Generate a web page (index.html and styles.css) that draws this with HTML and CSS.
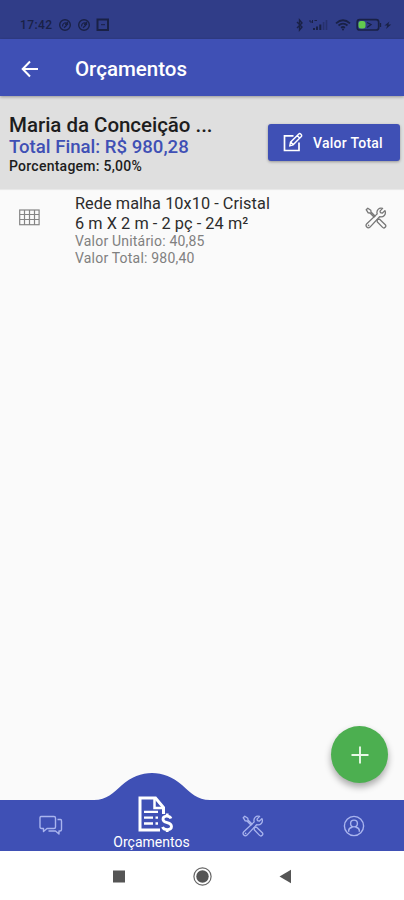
FILE: index.html
```html
<!DOCTYPE html>
<html lang="pt-BR">
<head>
<meta charset="utf-8">
<meta name="viewport" content="width=device-width, initial-scale=1">
<title>Orçamentos</title>
<link rel="stylesheet" href="styles.css">
</head>
<body>
<svg class="defs" width="0" height="0" aria-hidden="true">
  <symbol id="tools" viewBox="0 0 22 22">
    <g fill="none" stroke="currentColor" stroke-width="1.3" stroke-linejoin="round" stroke-linecap="round">
      <path d="M1.2 2.7 2.8 1.2 5.8 3.2 6 5 10 9M1.2 2.7 3.2 5.8 5 6 9 10"/>
      <path d="M12.3 12.6 14.6 12.2 20.3 17.7C21.8 19.5 19.3 22 17.6 20.4L12.2 14.8Z"/>
      <path d="M19.9 3.6 17.2 6.2 15.5 5.7 15 4.1 17.6 1.4C14 .2 11.1 3.3 12.2 6.9L1.8 16.8C-.2 19 2.7 22.2 5 20.1L14.6 9.7C18.4 10.6 21.6 7.6 19.9 3.6Z"/>
    </g>
    <circle cx="3.6" cy="18.4" r=".8" fill="currentColor"/>
  </symbol>
</svg>
<div class="screen">
  <div class="status">
    <span class="clock">17:42</span>
    <svg class="notices" width="54" height="14" viewBox="0 0 54 14" fill="none" stroke="currentColor">
      <g stroke-width="1.4"><circle cx="7" cy="7" r="5.3"/><circle cx="26" cy="7" r="5.3"/></g>
      <path d="M4.5 8.5C4.5 4.5 8 4 9.5 6M9.5 3.8V6.4H7M6 9.8 9 7M23.5 8.5C23.5 4.5 27 4 28.5 6M28.5 3.8V6.4H26M25 9.8 28 7" stroke-width="1.3"/>
      <rect x="39.5" y="1.5" width="10.5" height="10.5" stroke-width="2"/><path d="M43 6.7H47"/>
    </svg>
    <svg class="signals" width="98" height="14" viewBox="0 0 98 14" fill="none" stroke="currentColor">
      <path d="M2 4 7 9 4.5 12V2L7 5 2 10" stroke-width="1.4"/>
      <path d="M15 2V4H18M17.5 2V5M19.5 2.5H22" stroke-width="1"/>
      <path d="M19 12V10M22 12V8.5M25.3 12V6.5" stroke-width="2"/><path d="M28.6 12V4M31.5 12V2" stroke-width="1.6" opacity=".4"/>
      <path d="M41 5.3C45.5 1.3 50.5 1.3 55 5.3M43.5 7.5C46.5 5 49.5 5 52.5 7.5M46 9.7C47.5 8.7 48.5 8.7 50 9.7" stroke-width="1.8"/><circle cx="48" cy="11.5" r="1" fill="currentColor" stroke="none"/>
      <rect x="62.2" y="1.7" width="21.5" height="10.3" rx="2.5" stroke-width="1.7"/>
      <path d="M72 4.5 76 6.5 72 9.5M85.5 5V9" stroke-width="1.3"/>
      <rect x="63.5" y="3" width="7" height="7.5" rx="2.5" fill="#62c94e" stroke="none"/>
      <path d="M94.5 3.5 89.5 7.5H92.3L91 11 96.2 6.6H93.3Z" fill="currentColor" stroke="none"/>
    </svg>
  </div>
  <header class="appbar">
    <svg class="back" width="18" height="18" viewBox="0 0 18 18" fill="none" stroke="#fff" stroke-width="2"><path d="M17 9H2M9 1.5 1.7 9 9 16.5"/></svg>
    <h1>Orçamentos</h1>
  </header>
  <section class="summary">
    <div class="client">
      <div class="name">Maria da Conceição ...</div>
      <div class="total">Total Final: R$ 980,28</div>
      <div class="percent">Porcentagem: 5,00%</div>
    </div>
    <button class="value-button">
      <svg width="20" height="21" viewBox="0 0 20 21" fill="none" stroke="#fff" stroke-width="1.7"><path d="M10.5 3.8H1.5V18.5H16V10.5"/><path d="M6.8 13.8 7.5 10.2 15.8 1.9C17 .8 19.5 3.2 18.3 4.5L10.1 12.8ZM14.2 3.6 16.8 6.2M8 10.3 10 12.5" stroke-width="1.4"/></svg>
      <span>Valor Total</span>
    </button>
  </section>
  <main class="list">
    <article class="item">
      <svg class="grid-icon" width="21" height="17" viewBox="0 0 21 17" fill="none" stroke="#858585"><rect x=".7" y="1" width="19.4" height="14.7" stroke-width="1.2"/><path d="M5.5 1V16M10.500 1V16M15.500 1V16M1 5.500H20M1 10.500H20" stroke-width="1.200"/></svg>
      <div class="details">
        <div class="product">Rede malha 10x10 - Cristal</div>
        <div class="size">6 m X 2 m - 2 pç - 24 m²</div>
        <div class="unit">Valor Unitário: 40,85</div>
        <div class="subtotal">Valor Total: 980,40</div>
      </div>
      <svg class="item-tools" width="22" height="22"><use href="#tools"/></svg>
    </article>
  </main>
  <button class="fab" aria-label="Adicionar"><svg width="18" height="18" viewBox="0 0 18 18" stroke="#e9f8e7" stroke-width="1.9"><path d="M9 .5V17.5M.5 9H17.5"/></svg></button>
  <nav class="tabs">
    <svg class="bump" width="116" height="28" viewBox="0 0 116 28"><path d="M0 28V27C13 27 19 20 28 12C46-4 70-4 88 12C97 20 103 27 116 27V28Z" fill="#3f50b5"/></svg>
    <div class="tab"><svg width="24" height="21" viewBox="0 0 24 21" fill="none" stroke="currentColor" stroke-width="1.4" stroke-linejoin="round"><path d="M2 1.5H15Q16.5 1.5 16.5 3V12Q16.5 13.5 15 13.5H8L4.500 16.500V13.500H2.500Q1 13.500 1 12V3Q1 1.500 2 1.500ZM18.500 4.500H21.500Q22.500 4.500 22.500 6V14.500Q22.500 16 21 16H20V19L16.500 16H9.500"/></svg></div>
    <div class="tab active">
      <svg width="36" height="37" viewBox="0 0 36 37" fill="none" stroke="#fff"><path d="M25.5 18V11.5L17.5 2H2V34H22" stroke-width="3"/><path d="M16.5 3V12H25" stroke-width="2.5"/><path d="M6 15.8H20M6 21.7H15M17.5 21.7H20M6 27.5H15M17.5 27.5H20" stroke-width="2.3"/><path d="M33 22.5C31.5 19.2 25 19.3 25 23.2C25 28 33.5 25.4 33.5 30.4C33.5 34.5 26 34.7 24.5 31M29.2 17.5V21M29.2 32.5V36" stroke-width="2.8"/></svg>
      <span>Orçamentos</span>
    </div>
    <div class="tab"><svg width="22" height="22"><use href="#tools"/></svg></div>
    <div class="tab"><svg width="22" height="22" viewBox="0 0 22 22" fill="none" stroke="currentColor" stroke-width="1.4"><circle cx="11" cy="11" r="9.6"/><circle cx="11" cy="8.5" r="3.4"/><path d="M5.7 16.8V15.5C5.7 13.2 7.2 12.6 9 12.2V11M16.3 16.8V15.5C16.3 13.2 14.8 12.6 13 12.2V11"/></svg></div>
  </nav>
  <div class="system">
    <svg width="404" height="49" viewBox="0 0 404 49"><rect x="113" y="19.5" width="12" height="12" fill="#555"/><circle cx="202.5" cy="25.5" r="8.6" fill="none" stroke="#666" stroke-width="1.2"/><circle cx="202.5" cy="25.5" r="6.2" fill="#555"/><path d="M279.5 25.5 291 18.8V32.2Z" fill="#555"/></svg>
  </div>
</div>
</body>
</html>
```
FILE: styles.css
```css
* { box-sizing: border-box; }
body { margin: 0; font-family: Roboto, "Liberation Sans", sans-serif; }
button { border: 0; padding: 0; font: inherit; }
svg { display: block; flex-shrink: 0; }
.defs { position: absolute; }
.screen { position: relative; display: flex; flex-direction: column; width: 404px; height: 900px; overflow: hidden; background: #fafafa; }
.status { display: flex; align-items: center; height: 39px; padding: 11px 11px 0 20px; background: #303d88; color: #192146; }
.clock { width: 37px; font-size: 12px; font-weight: 500; letter-spacing: .4px; }
.notices { margin-left: 1px; }
.signals { margin-left: auto; }
.appbar { position: relative; z-index: 1; display: flex; align-items: center; height: 57px; padding: 2px 21px 0; background: #3f50b5; box-shadow: 0 1px 3px #0005; }
.appbar h1 { margin: 0 0 0 36px; color: #fff; font-size: 20.5px; font-weight: 500; line-height: 24px; }
.summary { display: flex; justify-content: space-between; height: 93px; padding: 18px 4px 0 9px; background: #dfdfdf; box-shadow: 0 1px 1px #0001; }
.client { font-weight: 500; color: #1d1d1d; }
.name { font-size: 20.5px; line-height: 22px; letter-spacing: -.03px; }
.total { color: #3f50b5; font-size: 18.6px; line-height: 22px; }
.percent { font-size: 14px; line-height: 16px; letter-spacing: .25px; }
.value-button { display: flex; align-items: center; width: 132px; height: 37px; margin-top: 10px; padding-left: 15px; gap: 10px; border-radius: 3px; background: #3f50b5; color: #fff; font-size: 14px; font-weight: 500; letter-spacing: .25px; box-shadow: 0 1px 3px #0005; }
.list { flex: 1; }
.item { display: flex; padding: 5px 17px 0 19px; }
.grid-icon { margin-top: 15px; }
.details { margin-left: 35px; color: #2c2c2c; }
.product, .size { font-size: 16.3px; line-height: 19.5px; letter-spacing: .06px; }
.unit, .subtotal { color: #808080; font-size: 14px; line-height: 16.5px; letter-spacing: .2px; }
.item-tools { margin: 13px 0 0 auto; color: #777; }
.fab { position: absolute; left: 331px; top: 726px; display: flex; align-items: center; justify-content: center; width: 57px; height: 57px; border-radius: 50%; background: #4caf50; box-shadow: 0 4px 7px #0005; }
.tabs { position: relative; display: grid; grid-template-columns: repeat(4, 1fr); height: 51px; background: #3f50b5; color: #a9b4ee; }
.bump { position: absolute; left: 94px; top: -27px; }
.tab { display: flex; align-items: center; justify-content: center; }
.tab.active { position: relative; flex-direction: column; justify-content: flex-end; height: 51px; padding-bottom: 1px; color: #fff; font-size: 14px; line-height: 15px; }
.tab.active svg { margin: -8px 0 2px 8px; }
.system { height: 49px; background: #fff; }
```
